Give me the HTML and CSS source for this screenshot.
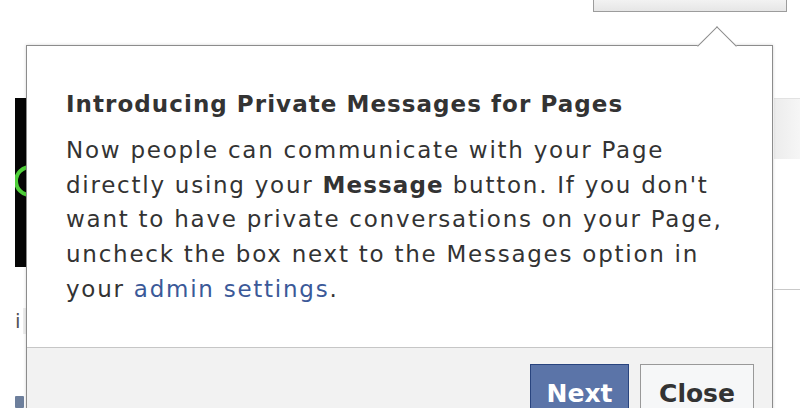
FILE: index.html
```
<!DOCTYPE html>
<html lang="en">
<head>
<meta charset="utf-8">
<title>Introducing Private Messages for Pages</title>
<link rel="stylesheet" href="styles.css">
</head>
<body>
<div class="page">
  <div class="topbar"><div class="topbtn"></div></div>
  <div class="cols">
    <div class="leftcol">
      <div class="thumb">
        <svg width="11" height="169" viewBox="0 0 11 169" aria-hidden="true">
          <rect x="0" y="0" width="11" height="169" fill="#050505"/>
          <circle cx="15" cy="83" r="14" fill="none" stroke="#4fcf3a" stroke-width="4"/>
        </svg>
      </div>
      <div class="info">i</div>
      <div class="sq"></div>
    </div>
    <div class="main"></div>
    <div class="rightcol">
      <div class="rblock"></div>
      <div class="rline"></div>
    </div>
  </div>

  <div class="popup">
    <div class="arrow"></div>
    <div class="popup-body">
      <h2 class="title">Introducing Private Messages for Pages</h2>
      <p class="text">Now people can communicate with your Page directly using your <b>Message</b> button. If you don't want to have private conversations on your Page, uncheck the box next to the Messages option in your <a class="link" href="#">admin settings</a>.</p>
    </div>
    <div class="popup-footer">
      <button class="btn btn-primary">Next</button>
      <button class="btn btn-default">Close</button>
    </div>
  </div>
</div>
</body>
</html>
```

FILE: styles.css
```
html, body {
  margin: 0;
  padding: 0;
  background: #ffffff;
}

body {
  font-family: "DejaVu Sans", "Liberation Sans", sans-serif;
  color: #333333;
}

.page {
  position: relative;
  width: 800px;
  height: 408px;
  overflow: hidden;
  background: #ffffff;
}

.topbar {
  display: flex;
  justify-content: flex-end;
  height: 12px;
  padding-right: 13px;
}

.topbtn {
  width: 192px;
  height: 11px;
  background: linear-gradient(#f2f2f2, #e6e6e6);
  border: 1px solid #9c9c9c;
  border-top: none;
}

.cols {
  display: flex;
  height: 396px;
}

.leftcol {
  width: 11px;
  padding-left: 15px;
  padding-top: 86px;
  display: flex;
  flex-direction: column;
}

.thumb {
  height: 169px;
}

.thumb svg {
  display: block;
}

.info {
  margin-top: 41px;
  font-size: 20px;
  line-height: 26px;
  color: #555555;
  border-right: 3px solid #ededed;
}

.sq {
  margin-top: 62px;
  width: 9px;
  height: 12px;
  background: #6d7f9c;
  border-radius: 1px;
}

.main {
  flex: 1;
}

.rightcol {
  width: 26px;
  padding-top: 86px;
  display: flex;
  flex-direction: column;
}

.rblock {
  height: 60px;
  border-top: 1px solid #e2e2e2;
  background: linear-gradient(90deg, #ececec, #f6f6f6);
}

.rline {
  margin-top: 130px;
  height: 1px;
  background: #c9c9c9;
}

/* Popup dialog overlaying the page */
.popup {
  position: absolute;
  left: 26px;
  top: 45px;
  width: 745px;
  background: #ffffff;
  border: 1px solid #8c8c8c;
  box-shadow: 0 0 3px rgba(0, 0, 0, 0.18);
}

.arrow {
  position: absolute;
  left: 676px;
  top: -14px;
  width: 27px;
  height: 27px;
  background: #ffffff;
  border-top: 1px solid #8c8c8c;
  border-left: 1px solid #8c8c8c;
  transform: rotate(45deg);
}

.popup-body {
  padding: 43px 30px 40px 39px;
}

.title {
  margin: 0 0 14px 0;
  font-size: 23px;
  line-height: 30px;
  font-weight: bold;
  letter-spacing: 1.05px;
  color: #333333;
}

.text {
  margin: 0;
  font-size: 23px;
  line-height: 34.7px;
  letter-spacing: 1.75px;
  color: #333333;
}

.text b {
  font-weight: bold;
  letter-spacing: 1.1px;
}

.link {
  color: #3b5998;
  text-decoration: none;
}

.popup-footer {
  display: flex;
  justify-content: flex-end;
  align-items: flex-start;
  gap: 11px;
  padding: 16px 18px 20px 0;
  background: #f2f2f2;
  border-top: 1px solid #c6c6c6;
}

.btn {
  box-sizing: border-box;
  margin: 0;
  padding: 14px 0 17px 0;
  font-family: "DejaVu Sans", "Liberation Sans", sans-serif;
  font-size: 25px;
  line-height: 29px;
  font-weight: bold;
  text-align: center;
  display: block;
}

.btn-primary {
  width: 99px;
  background: #5b74a8;
  border: 1px solid #29447e;
  color: #ffffff;
}

.btn-default {
  width: 114px;
  background: #f6f7f8;
  border: 1px solid #999999;
  color: #333333;
}
```
